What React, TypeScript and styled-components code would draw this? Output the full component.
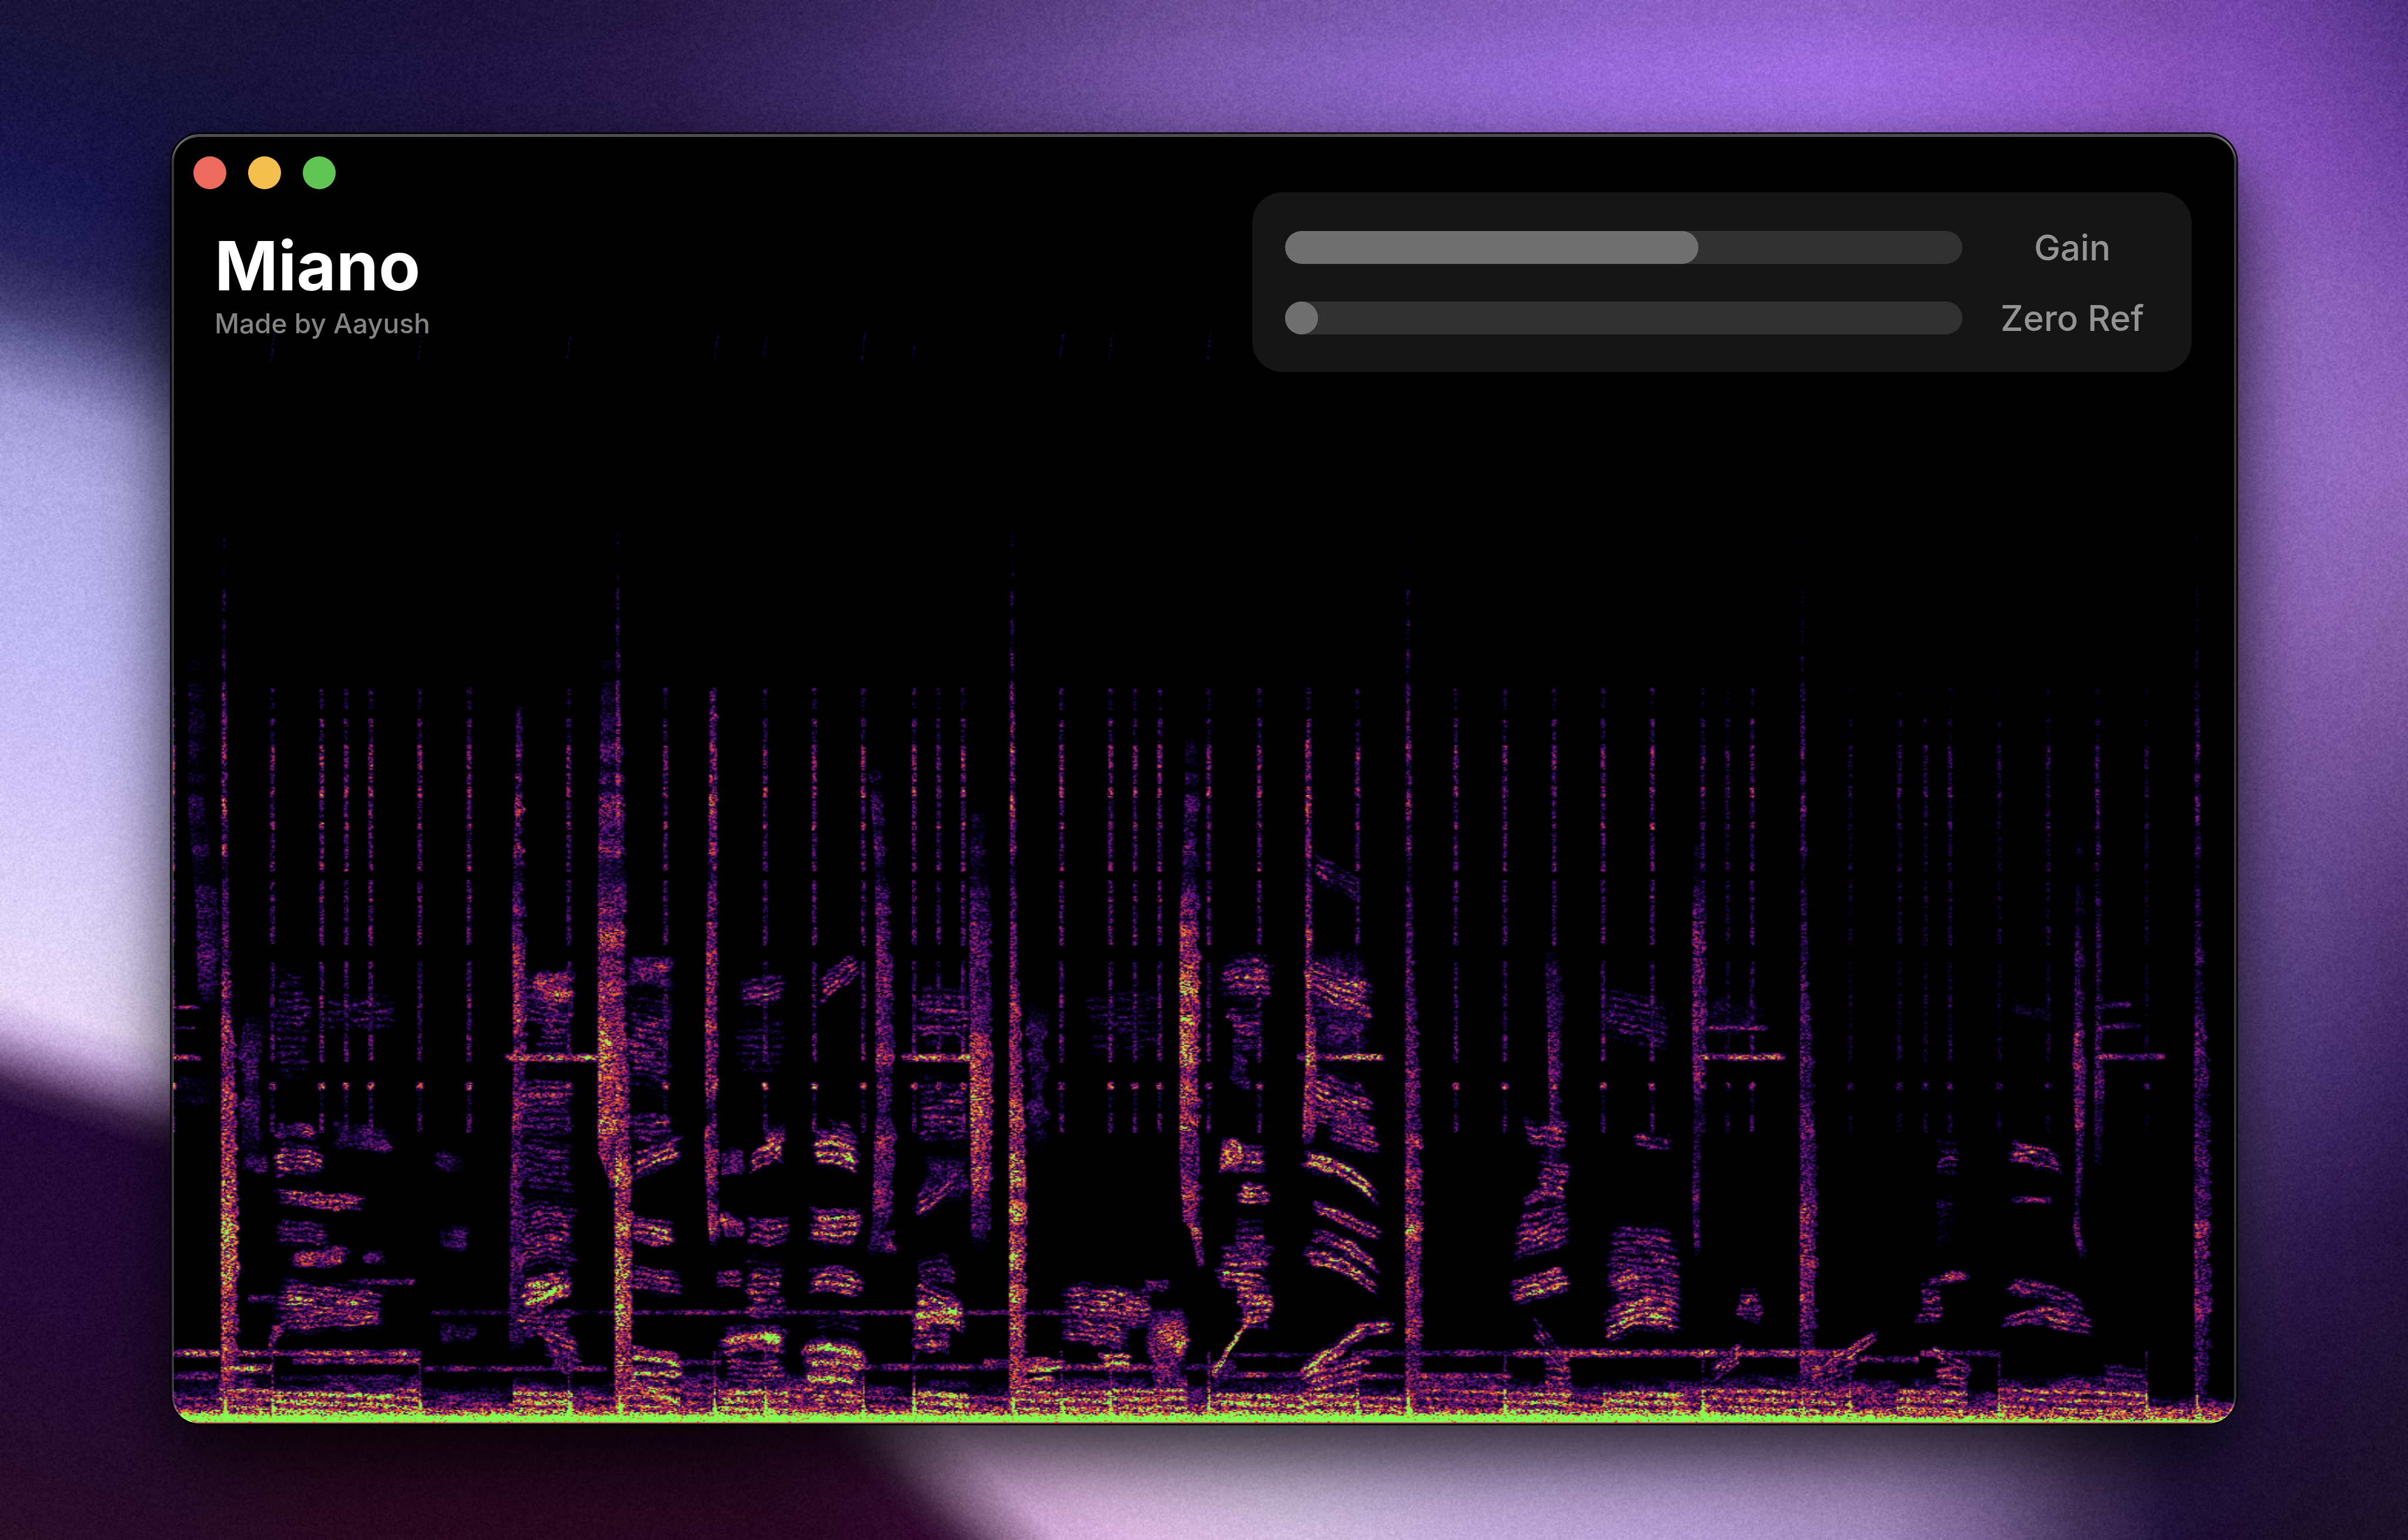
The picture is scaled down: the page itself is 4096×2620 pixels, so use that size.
import React, { useLayoutEffect, useRef, useState } from "react";
import styled, { createGlobalStyle } from "styled-components";

/* ---------- shared maths ---------- */

type RGB = [number, number, number];
type Stop = [number, RGB];

const clamp = (v: number, lo = 0, hi = 1) => (v < lo ? lo : v > hi ? hi : v);
const smooth = (a: number, b: number, v: number) => {
  const t = clamp((v - a) / (b - a));
  return t * t * (3 - 2 * t);
};
const mix = (a: RGB, b: RGB, t: number): RGB => [
  a[0] + (b[0] - a[0]) * t,
  a[1] + (b[1] - a[1]) * t,
  a[2] + (b[2] - a[2]) * t,
];
const hex = (n: number): RGB => [(n >> 16) & 255, (n >> 8) & 255, n & 255];
const ramp = (...pairs: number[]): Stop[] => {
  const out: Stop[] = [];
  for (let i = 0; i < pairs.length; i += 2) out.push([pairs[i], hex(pairs[i + 1])]);
  return out;
};
const sample = (stops: Stop[], v: number): RGB => {
  if (v <= stops[0][0]) return stops[0][1];
  for (let i = 1; i < stops.length; i++) {
    if (v <= stops[i][0]) {
      const t = (v - stops[i - 1][0]) / (stops[i][0] - stops[i - 1][0]);
      return mix(stops[i - 1][1], stops[i][1], t);
    }
  }
  return stops[stops.length - 1][1];
};
const makeRandom = (seed: number) => () => {
  seed = (seed + 0x6d2b79f5) | 0;
  let t = Math.imul(seed ^ (seed >>> 15), 1 | seed);
  t = (t + Math.imul(t ^ (t >>> 7), 61 | t)) ^ t;
  return ((t ^ (t >>> 14)) >>> 0) / 4294967296;
};
const lattice = (ix: number, iy: number) => {
  let h = Math.imul(ix, 374761393) + Math.imul(iy, 668265263);
  h = Math.imul(h ^ (h >>> 13), 1274126177);
  return ((h ^ (h >>> 16)) >>> 0) / 4294967296;
};
/* Smooth value noise in 0..1. */
const drift = (x: number, y: number) => {
  const ix = Math.floor(x);
  const iy = Math.floor(y);
  const u = smooth(0, 1, x - ix);
  const v = smooth(0, 1, y - iy);
  const a = lattice(ix, iy) * (1 - u) + lattice(ix + 1, iy) * u;
  const b = lattice(ix, iy + 1) * (1 - u) + lattice(ix + 1, iy + 1) * u;
  return a * (1 - v) + b * v;
};

/* ---------- wallpaper ---------- */

const TOP = ramp(
  0, 0x1a1438, 100, 0x17143f, 300, 0x1e1442, 430, 0x291a4c, 540, 0x3c2a66, 650, 0x5c4088,
  780, 0x7c5aae, 900, 0x8a64c6, 1050, 0x9a6cdc, 1200, 0xa06ee2, 1330, 0x945ed0, 1440, 0x8450b6,
  1500, 0x6c429c, 1568, 0x4e2f7c,
);
const LEFT = ramp(
  0, 0x1a1438, 50, 0x171442, 110, 0x1a1650, 160, 0x27235a, 195, 0x423e74, 222, 0x6a66a0,
  255, 0x9c97d2, 300, 0xb2ade6, 400, 0xbfb8f4, 500, 0xcfc4f8, 600, 0xe0d6fa, 648, 0xe8d8f8,
  668, 0xcab0e2, 686, 0x8a6a9c, 703, 0x40244e, 718, 0x240838, 850, 0x240a34, 950, 0x260c2a, 1003, 0x2a0e28,
);
const BOTTOM = ramp(
  0, 0x2a0e28, 300, 0x2a0820, 520, 0x280822, 605, 0x340a30, 625, 0x442244, 650, 0x846084,
  690, 0xd8aede, 740, 0xe2bce8, 850, 0xd6c2e4, 960, 0xc8b0e0, 1100, 0xbaa0d8, 1220, 0xa68cc0,
  1290, 0x7c6498, 1350, 0x48345e, 1410, 0x261644, 1568, 0x1c0f28,
);
const RIGHT: [number, Stop[]][] = [
  [1450, ramp(0, 0x7848b0, 100, 0x8e5cc8, 200, 0x9068c0, 300, 0x926cc2, 400, 0x8a66b4, 500, 0x7c5aa4, 600, 0x6c4e96, 700, 0x5a4284, 800, 0x402c62, 900, 0x281848, 1003, 0x1e0e32)],
  [1500, ramp(0, 0x6a3fa0, 100, 0x8450ba, 200, 0x9068c0, 300, 0x936cc4, 400, 0x8c64b6, 500, 0x76549e, 600, 0x60468a, 700, 0x4a3272, 800, 0x301a50, 900, 0x22103a, 1003, 0x1c1028)],
  [1568, ramp(0, 0x4e2f80, 100, 0x6a3fa0, 200, 0x8458b4, 300, 0x9068bc, 400, 0x8460a8, 500, 0x6c4c90, 600, 0x4f3270, 700, 0x36205a, 800, 0x24103c, 900, 0x1e1230, 1003, 0x1c1028)],
];

const rightColour = (x: number, y: number): RGB => {
  const a = sample(RIGHT[0][1], y);
  const b = sample(RIGHT[1][1], y);
  const c = sample(RIGHT[2][1], y);
  return x < 1500 ? mix(a, b, clamp((x - 1450) / 50)) : mix(b, c, clamp((x - 1500) / 68));
};

const wallpaperColour = (x: number, y: number): RGB => {
  const left = sample(LEFT, y - 0.3 * x);
  if (y < 200) {
    const top = mix([0, 0, 0], sample(TOP, x), 0.9 + 0.1 * smooth(0, 50, y));
    return mix(mix(left, top, smooth(60, 260, x)), rightColour(x, y), smooth(1380, 1470, x));
  }
  if (y > 840) {
    const lean = 1 - smooth(700, 1150, x);
    const bottom = sample(BOTTOM, x + (1003 - y) * (1.1 * lean - 0.1));
    return mix(mix(left, bottom, smooth(60, 220, x)), rightColour(x, y), smooth(1380, 1460, x));
  }
  return x < 784 ? left : rightColour(x, y);
};

const paintWallpaper = (canvas: HTMLCanvasElement) => {
  const W = 1568;
  const H = 1003;
  canvas.width = W;
  canvas.height = H;
  const ctx = canvas.getContext("2d")!;
  const img = ctx.createImageData(W, H);
  const random = makeRandom(7);
  for (let y = 0; y < H; y++) {
    for (let x = 0; x < W; x++) {
      const i = (y * W + x) * 4;
      img.data[i + 3] = 255;
      if (x > 130 && x < 1440 && y > 105 && y < 910) continue;
      const c = wallpaperColour(x, y);
      const grain = (random() + random() - 1) * (7 + Math.min(c[2], 160) * 0.06);
      img.data[i] = c[0] + grain;
      img.data[i + 1] = c[1] + grain;
      img.data[i + 2] = c[2] + grain;
    }
  }
  ctx.putImageData(img, 0, 0);
};

/* ---------- spectrogram ---------- */

const VIEW = { x: 111.8, y: 87.3, w: 1345.2, h: 839.9 };
const COLS = 1344;
const ROWS = 1120;

const HEAT: Stop[] = [
  [0, [0, 0, 0]],
  [0.1, [6, 2, 26]],
  [0.22, [38, 8, 84]],
  [0.36, [94, 20, 122]],
  [0.5, [158, 32, 104]],
  [0.62, [198, 48, 58]],
  [0.76, [226, 100, 44]],
  [0.88, [226, 184, 62]],
  [0.95, [190, 236, 70]],
  [1, [128, 255, 82]],
];

/* Strength of a hi-hat click down the frequency axis: y0, y1, level. */
const CLICK_BANDS = [
  [447, 453, 0.42], [453, 463, 0.3], [467, 474, 0.54], [474, 484, 0.36], [484, 502, 0.64], [502, 511, 0.56],
  [511, 520, 0.74], [520, 534, 0.48], [534, 541, 0.68], [541, 560, 0.48], [560, 568, 0.6],
  [572, 582, 0.48], [582, 588, 0.6], [588, 602, 0.46], [602, 616, 0.54], [625, 646, 0.44],
  [646, 657, 0.54], [657, 672, 0.42], [672, 692, 0.54], [704, 710, 0.84], [710, 724, 0.3], [724, 738, 0.5],
];
const CLICKS: [number, number][] = [
  [112, 1], [177, 0.85], [209, 1], [225, 0.9], [241, 1], [273, 0.9], [305, 1], [370, 0.85], [433, 0.9],
  [465, 1], [498, 0.85], [530, 0.95], [562, 0.9], [595, 0.95], [611, 0.8], [627, 0.95], [691, 0.95],
  [723, 0.95], [739, 0.9], [755, 0.95], [787, 0.85], [820, 0.9], [852, 0.95], [884, 0.85], [948, 0.85],
  [980, 0.85], [1012, 0.85], [1044, 0.85], [1076, 0.9], [1109, 0.7], [1125, 0.6], [1141, 0.8], [1205, 0.46],
  [1237, 0.55], [1254, 0.55], [1270, 0.58], [1302, 0.48], [1334, 0.54], [1366, 0.6], [1398, 0.48],
];

/* Drum strikes, each as keys of y, left, right, level. */
const kick = (x: number, g: number): number[][] => [
  [345, x - 1, x + 1, 0.2 * g], [380, x - 1, x + 1, 0.3 * g], [440, x - 1.5, x + 1.5, 0.36 * g],
  [490, x - 1.5, x + 2, 0.58 * g], [620, x - 1.5, x + 3.5, 0.58 * g], [690, x - 2, x + 7, 0.66 * g],
  [760, x - 2, x + 9, 0.8 * g], [800, x - 2, x + 9, 0.92 * g], [860, x - 2, x + 9, 0.82 * g],
  [890, x - 2, x + 9, 0.68 * g], [922, x - 2, x + 6, 0.74 * g],
];
const STRIKES: number[][][] = [
  kick(145.5, 1), kick(402, 1.05), kick(659, 1.02), kick(917, 0.84), kick(1174, 0.7), kick(1431, 0.66),
  [[430, 391, 404, 0.14], [500, 390, 406, 0.36], [570, 389, 407, 0.58], [610, 389, 407, 0.74], [690, 389, 407, 0.82], [750, 389, 407, 0.76], [768, 396, 407, 0.54], [790, 398, 405, 0.1]],
  [[460, 336, 340, 0.3], [520, 335, 340, 0.54], [600, 333, 342, 0.58], [690, 334, 342, 0.7], [770, 332, 340, 0.52], [870, 331, 342, 0.5], [885, 333, 342, 0]],
  [[450, 462, 466, 0.44], [560, 461, 467, 0.62], [640, 459, 467, 0.66], [710, 459, 467, 0.66], [728, 460, 465, 0.26], [740, 458, 468, 0.7], [780, 460, 468, 0.56], [800, 461, 469, 0.7], [812, 462, 468, 0.2]],
  [[500, 565, 574, 0.24], [550, 569, 576, 0.44], [600, 570, 580, 0.58], [690, 570, 582, 0.62], [724, 571, 581, 0.34], [740, 569, 583, 0.66], [790, 568, 580, 0.5], [812, 565, 572, 0.15]],
  [[530, 632, 642, 0.24], [600, 631, 645, 0.5], [690, 631, 646, 0.7], [760, 632, 646, 0.72], [800, 632, 645, 0.54], [822, 634, 642, 0]],
  [[480, 772, 780, 0.2], [560, 770, 780, 0.46], [600, 768, 781, 0.7], [625, 768, 781, 0.88], [690, 768, 781, 0.82], [750, 768, 781, 0.7], [795, 770, 782, 0.56], [800, 775, 782, 0.84], [820, 779, 784, 0.64], [828, 780, 784, 0]],
  [[480, 850, 854, 0.5], [640, 850, 855, 0.7], [688, 850, 858, 0.78], [740, 848, 856, 0.54], [750, 850, 854, 0]],
  [[540, 1104, 1108, 0.18], [600, 1102, 1111, 0.52], [690, 1102, 1111, 0.62], [720, 1103, 1109, 0.34], [780, 1102, 1107, 0.5], [812, 1103, 1108, 0.34], [825, 1104, 1108, 0]],
  [[540, 1352, 1356, 0.18], [655, 1351, 1357, 0.5], [690, 1350, 1359, 0.6], [760, 1352, 1357, 0.46], [785, 1351, 1355, 0.24], [800, 1350, 1355, 0.56], [815, 1353, 1359, 0.34], [824, 1356, 1360, 0]],
  [[490, 1365, 1368, 0.3], [640, 1365, 1369, 0.44], [700, 1364, 1371, 0.5], [770, 1364, 1369, 0.14]],
  [[430, 122, 132, 0.18], [530, 122, 134, 0.26], [590, 127, 142, 0.42], [640, 128, 142, 0.42], [655, 130, 140, 0.1]],
  [[620, 1006, 1014, 0.24], [650, 1007, 1018, 0.46], [730, 1009, 1016, 0.46], [790, 1008, 1014, 0.24]],
];

/* Voiced passages: x0, x1, y0, y1, level, slope, arch, stripe period (0 for plain noise). */
const VOICES: number[][] = [
  [108, 130, 653, 658, 0.6, 0, 0, 0], [108, 128, 667, 671, 0.5, 0, 0, 0], [108, 132, 685, 692, 0.8, 0, 0, 0],
  [112, 143, 695, 725, 0.26, 0, 0, 0], [155, 172, 640, 770, 0.36, 0, 0, 0], [156, 176, 748, 766, 0.38, 0, 0, 0],
  [176, 210, 728, 744, 0.56, 0, 0, 0], [212, 260, 726, 752, 0.46, 0.1, 0, 0], [176, 204, 610, 725, 0.36, 0, 0, 5],
  [204, 262, 642, 676, 0.36, 0, 0, 5], [176, 213, 741, 771, 0.92, 0.1, 3, 4], [174, 242, 770, 787, 0.74, 0.08, 0, 4],
  [177, 217, 789, 813, 0.6, 0.1, 0, 4], [186, 230, 812, 830, 0.6, -0.1, 0, 0], [236, 254, 811, 826, 0.5, 0, 0, 0],
  [174, 256, 827, 862, 0.78, 0.1, 1, 4], [174, 256, 850, 874, 0.74, -0.06, 2, 4], [158, 184, 841, 850, 0.5, 0, 0, 0],
  [225, 275, 831, 838, 0.5, 0, 0, 0], [175, 184, 860, 884, 0.6, -1, 0, 0], [282, 304, 746, 766, 0.34, 0, 0, 0],
  [284, 306, 792, 820, 0.34, 0, 0, 0], [284, 312, 858, 878, 0.3, 0, 0, 0],
  [332, 366, 622, 668, 0.6, 0.35, 0, 5], [344, 376, 626, 662, 0.68, 0, 0, 0], [348, 376, 644, 704, 0.52, 0, 0, 5],
  [326, 396, 684, 693, 0.96, 0, 0, 0], [332, 376, 692, 748, 0.52, 0, 0, 5], [332, 378, 730, 785, 0.46, 0.1, 0, 5],
  [332, 378, 775, 845, 0.5, -0.05, 5, 4], [336, 376, 828, 853, 0.9, -0.2, 0, 5], [340, 376, 842, 861, 1.15, -0.5, 0, 7],
  [332, 376, 848, 876, 0.62, 0, 0, 4], [350, 380, 852, 886, 0.6, 0.5, 0, 5], [356, 378, 868, 896, 0.52, 0.4, 0, 0],
  [406, 442, 618, 648, 0.6, 0, 0, 0], [406, 440, 632, 720, 0.5, 0.2, 0, 5], [408, 442, 720, 750, 0.56, 0, 0, 5],
  [408, 446, 748, 773, 0.8, -0.4, 0, 5], [406, 440, 784, 812, 0.86, 0.2, 0, 5], [407, 446, 819, 843, 0.72, 0.15, 0, 4],
  [405, 446, 875, 889, 1.3, 0.15, 2, 7], [407, 446, 887, 901, 1.1, 0, 0, 6], [408, 442, 894, 908, 0.8, 0, 0, 4],
  [414, 450, 892, 908, 1.15, 0.5, 0, 6],
  [480, 516, 634, 664, 0.5, -0.2, 0, 5], [478, 514, 650, 710, 0.3, 0, 0, 5], [532, 560, 632, 660, 0.6, -0.7, 0, 5],
  [470, 486, 744, 770, 0.54, 0, 0, 0], [486, 515, 747, 770, 0.76, -0.5, 0, 5], [498, 513, 726, 764, 0.6, 0, 0, 0],
  [483, 515, 785, 813, 0.74, 0, -3, 5], [469, 485, 785, 807, 0.7, 0.3, 0, 0], [466, 486, 824, 842, 0.6, 0, 0, 4],
  [484, 513, 810, 868, 0.58, 0, 0, 5], [465, 517, 865, 889, 1.15, 0, 6, 9], [469, 515, 878, 908, 0.64, 0, 0, 4],
  [466, 512, 900, 922, 1.05, -0.05, 0, 6], [526, 563, 732, 766, 1, 0.2, 4, 6], [538, 558, 722, 740, 0.6, 0.4, 0, 5],
  [524, 563, 779, 813, 0.84, 0, -3, 5], [523, 564, 822, 850, 0.78, 0.1, 5, 5], [528, 562, 852, 874, 0.34, 0, 3, 4],
  [520, 566, 869, 895, 1.18, 0.1, 4, 9], [521, 563, 887, 907, 1.2, 0.05, 0, 8], [524, 565, 901, 923, 0.8, 0, 2, 4],
  [564, 586, 796, 820, 0.5, 0, 0, 0],
  [593, 636, 632, 688, 0.54, 0, 0, 5], [586, 640, 684, 693, 0.96, 0, 0, 0], [594, 634, 690, 755, 0.5, 0, 0, 5],
  [594, 624, 776, 800, 0.66, -0.7, 0, 5], [598, 634, 745, 790, 0.38, 0, 0, 0], [598, 622, 816, 844, 0.56, 0, 4, 4],
  [594, 629, 826, 860, 0.76, 0.5, 3, 5], [592, 629, 849, 871, 1.15, -0.15, 2, 8], [593, 624, 862, 888, 0.68, 0, 4, 5],
  [590, 633, 901, 922, 1.1, 0.1, 3, 6], [700, 764, 630, 700, 0.28, 0, 0, 5], [668, 684, 630, 770, 0.36, 0, 0, 0],
  [688, 755, 830, 862, 0.74, 0.12, 2, 4], [688, 740, 850, 878, 0.7, 0.2, 2, 4], [716, 754, 834, 874, 0.66, -0.1, 0, 4],
  [742, 766, 831, 843, 0.52, 0, 0, 0], [745, 776, 846, 896, 0.66, 0, 0, 0], [747, 773, 856, 886, 0.84, 0, 0, 0],
  [748, 774, 880, 912, 0.56, 0, 0, 0], [715, 740, 877, 897, 0.84, 0, 0, 5], [658, 698, 883, 896, 1, 0, 0, 7],
  [660, 692, 892, 912, 0.7, 0, 0, 5],
  [791, 831, 618, 660, 0.6, 0, 3, 5], [798, 826, 646, 694, 0.5, 0, 0, 5], [800, 816, 676, 712, 0.4, 0.4, 0, 0],
  [792, 809, 738, 767, 1.05, 0, 0, 0], [806, 826, 740, 768, 0.74, 0, 0, 5], [805, 828, 766, 788, 0.9, 0, 0, 5],
  [804, 824, 784, 838, 0.5, 0, 0, 5], [792, 832, 806, 832, 0.58, 0, 0, 5], [791, 826, 820, 840, 0.84, 0.2, 0, 5],
  [805, 829, 828, 872, 0.98, 0, 0, 5], [789, 818, 890, 900, 1.1, -1.5, 0, 0], [790, 806, 880, 906, 0.5, 0, 0, 0],
  [850, 896, 600, 710, 0.38, 0, 0, 0], [848, 898, 612, 656, 0.76, 0.4, 0, 5], [842, 906, 684, 692, 0.9, 0, 0, 0],
  [850, 898, 684, 738, 0.66, 0.4, 0, 5], [845, 899, 744, 765, 1.02, 0.5, 7, 6], [864, 900, 714, 750, 0.64, 0.3, 0, 5],
  [854, 905, 776, 793, 0.78, 0.45, 0, 5], [845, 905, 810, 828, 0.84, 0.5, 10, 6], [850, 902, 795, 813, 0.7, 0.5, 6, 5],
  [844, 900, 888, 905, 1.08, -0.7, 0, 6], [848, 894, 884, 916, 0.7, -0.2, 0, 5], [878, 908, 858, 875, 0.76, -0.1, 0, 5],
  [854, 888, 550, 576, 0.44, 0.5, 0, 5],
  [990, 1025, 722, 752, 0.66, 0.1, 0, 5], [1000, 1023, 744, 788, 0.64, 0.2, 0, 5], [992, 1012, 778, 789, 0.46, -0.6, 0, 0],
  [984, 1025, 784, 830, 0.62, -0.3, 0, 5], [980, 1026, 831, 856, 0.78, -0.3, 0, 5], [996, 1021, 849, 873, 0.6, 1.2, 0, 5],
  [1004, 1026, 870, 916, 0.7, 0, 0, 5], [1042, 1098, 788, 838, 0.54, 0.1, 2, 5], [1042, 1100, 827, 855, 0.7, 0, 7, 5],
  [1042, 1098, 846, 882, 0.9, -0.1, 8, 5], [1038, 1094, 630, 684, 0.38, 0.25, 0, 5], [1062, 1094, 734, 750, 0.5, 0.1, 0, 5],
  [1104, 1156, 666, 672, 0.54, 0, 0, 0], [1100, 1166, 684, 692, 0.8, 0, 0, 0], [1108, 1152, 644, 680, 0.28, 0, 0, 0],
  [1131, 1148, 834, 866, 0.6, 0, 0, 4], [1114, 1136, 884, 908, 0.6, -0.8, 0, 4], [1172, 1226, 892, 908, 0.68, -0.6, 0, 5],
  [1174, 1214, 882, 910, 0.64, -0.3, 0, 5], [1247, 1268, 830, 868, 0.58, 0, 0, 5], [1254, 1286, 829, 841, 0.6, -0.2, 0, 0],
  [1258, 1282, 871, 888, 0.72, 0.5, 0, 5], [1260, 1284, 880, 910, 0.6, 0, 0, 5], [1262, 1278, 738, 770, 0.46, 0, 0, 5],
  [1262, 1274, 770, 820, 0.28, 0, 0, 0], [1305, 1344, 740, 764, 0.64, 0.2, 4, 5], [1310, 1340, 777, 785, 0.5, 0, 0, 0],
  [1302, 1364, 827, 847, 0.6, 0.3, 5, 5], [1298, 1366, 855, 873, 0.7, 0, 8, 5], [1320, 1366, 844, 866, 0.6, 0.2, 0, 5],
  [1364, 1402, 882, 912, 0.56, 0.1, 0, 5], [1340, 1362, 860, 868, 0.3, 0, 0, 0], [1360, 1410, 684, 692, 0.66, 0, 0, 0],
  [1366, 1392, 650, 658, 0.42, 0, 0, 0], [1366, 1394, 664, 672, 0.42, 0, 0, 0], [1308, 1340, 644, 662, 0.24, 0.4, 0, 0],
];

/* Held tones: x0, x1, y, thickness, level. */
const TONES: number[][] = [
  [112, 143, 881, 4, 0.86], [143, 177, 891, 5, 1.05], [150, 273, 881, 4, 0.74], [190, 273, 886, 4, 0.7],
  [275, 395, 891, 3.5, 0.56], [280, 400, 854.5, 3, 0.36], [400, 700, 854.5, 3, 0.54], [440, 470, 887, 4, 0.5],
  [540, 660, 890, 4, 0.54], [690, 790, 890, 4, 0.62], [640, 690, 887, 4, 0.6], [800, 870, 882, 3, 0.42],
  [880, 985, 881, 4, 0.56], [885, 985, 896, 4, 0.62], [985, 1110, 881, 4.5, 0.74], [1110, 1210, 881, 4.5, 0.76],
  [1210, 1250, 885, 4, 0.5], [1250, 1302, 881, 4, 0.54], [790, 850, 895, 4, 0.62],
  [112, 150, 896, 6, 0.5], [177, 273, 897, 4, 0.36],
];

/* Bass floor: x0, x1, top of the bright band, level. */
const FLOOR: number[][] = [
  [112, 143, 908, 0.62], [143, 177, 903, 0.98], [177, 256, 905, 1.18], [256, 273, 903, 0.88], [273, 334, 911, 0.6],
  [334, 372, 905, 1.1], [372, 402, 908, 0.66], [402, 442, 902, 0.9], [442, 468, 900, 0.64], [468, 512, 904, 1],
  [512, 530, 902, 0.7], [530, 562, 904, 0.76], [562, 594, 908, 0.64], [594, 630, 906, 1.06], [630, 659, 908, 0.7],
  [659, 690, 904, 1.04], [690, 723, 904, 1.04], [723, 750, 903, 1.04], [750, 772, 903, 1.08], [772, 787, 908, 0.7],
  [787, 848, 906, 1.16], [848, 884, 906, 1.06], [884, 917, 908, 0.84], [917, 980, 903, 0.72], [980, 1025, 905, 1.04],
  [1025, 1045, 908, 0.7], [1045, 1096, 905, 1.14], [1096, 1110, 907, 0.74], [1110, 1205, 903, 0.9],
  [1205, 1236, 905, 0.64], [1236, 1281, 904, 0.92], [1281, 1302, 912, 0.5], [1302, 1398, 903, 0.8], [1398, 1457, 917, 0.54],
];
const THUMPS = [146, 177, 273, 370, 403, 465, 498, 562, 595, 660, 691, 723, 787, 884, 917, 980, 1109, 1174, 1205, 1302, 1398, 1431];
const SPARKS = [177, 273, 370, 466, 498, 562, 595, 691, 723, 787];

const buildField = () => {
  const field = new Float32Array(COLS * ROWS);
  const sx = COLS / VIEW.w;
  const sy = ROWS / VIEW.h;
  const toCol = (x: number) => clamp(Math.round((x - VIEW.x) * sx), 0, COLS - 1);
  const toRow = (y: number) => clamp(Math.round((y - VIEW.y) * sy), 0, ROWS - 1);

  const cover = (
    x0: number, x1: number, y0: number, y1: number,
    level: (x: number, y: number) => number,
  ) => {
    const c1 = toCol(x1);
    const r1 = toRow(y1);
    for (let r = toRow(y0); r <= r1; r++) {
      const y = VIEW.y + r / sy;
      for (let c = toCol(x0); c <= c1; c++) {
        const v = level(VIEW.x + c / sx, y);
        const i = r * COLS + c;
        if (v > field[i]) field[i] = v;
      }
    }
  };
  const fade = (v: number, a: number, b: number, soft: number) =>
    clamp((v - a) / soft + 0.3) * clamp((b - v) / soft + 0.3);

  for (const [x, gain] of CLICKS) {
    for (const [y0, y1, level] of CLICK_BANDS) {
      const half = level > 0.8 ? 2.6 : 1.9;
      cover(x - half, x + half, y0, y1, (px, py) =>
        level * gain * clamp(1.4 - Math.abs(px - x) / half) * fade(py, y0, y1, 2));
    }
  }

  for (const keys of STRIKES) {
    for (let k = 1; k < keys.length; k++) {
      const [ya, la, ra, va] = keys[k - 1];
      const [yb, lb, rb, vb] = keys[k];
      cover(Math.min(la, lb) - 2, Math.max(ra, rb) + 3, ya, yb, (px, py) => {
        const t = (py - ya) / (yb - ya);
        const l = la + (lb - la) * t;
        const r = ra + (rb - ra) * t + (drift(px * 0.05, py * 0.3) - 0.5) * (rb - lb > 5 ? 4 : 1);
        const beat = py < 600 ? 0.5 + 0.9 * drift(3, py * 0.15) : 0.74 + 0.5 * drift(la, py * 0.09);
        const lean = 1.08 - 0.34 * clamp((px - l) / Math.max(4, r - l));
        return (va + (vb - va) * t) * beat * lean * fade(px, l - 0.5, r + 0.5, 2);
      });
    }
  }

  for (const [x0, x1, y0, y1, level, slope, arch, period] of VOICES) {
    const thin = y1 - y0 < 10 && period === 0;
    const bend = (px: number) => {
      const u = (px - x0) / (x1 - x0);
      return slope * (px - x0) - arch * 4 * u * (1 - u);
    };
    const reach = Math.abs(slope) * (x1 - x0) + Math.abs(arch) + 3;
    const softY = (y1 - y0) * (thin ? 0.45 : 0.36);
    const softX = (x1 - x0) * (thin ? 0.12 : 0.22);
    cover(x0, x1, y0 - reach, y1 + reach, (px, py) => {
      const blot = drift(px * 0.16, py * 0.26);
      const q = py - bend(px) + (thin ? 0 : (blot - 0.5) * 3);
      const p = px + (drift(px * 0.1 + 9, py * 0.15) - 0.5) * 7;
      const stripe = period ? 0.78 + 0.32 * Math.sin(((q - y0) / period) * Math.PI * 2) : 0.95;
      const body = 0.6 + 0.76 * drift(px * 0.1 + 40, py * 0.17);
      return level * stripe * body * smooth(0, softX, p - x0 + 1) * smooth(0, softX, x1 - p) *
        smooth(0, softY, q - y0) * smooth(0, softY, y1 - q);
    });
  }

  for (const [x0, x1, y, thick, level] of TONES) {
    cover(x0, x1, y - thick, y + thick, (px, py) => {
      const wobble = 0.6 + 0.66 * drift(px * 0.14, y);
      return level * wobble * clamp(1.25 - Math.abs(py - y) / (thick * 0.75)) * fade(px, x0, x1, 1);
    });
  }

  for (const [x0, x1, top, level] of FLOOR) {
    cover(x0, x1, top - 14, 928, (px, py) => {
      const body = level * (0.8 + 0.26 * Math.sin((py - top - (px - x0) * 0.04) * 1.1)) * (0.8 + 0.36 * drift(px * 0.12, py * 0.4));
      const haze = 0.46 * smooth(top - 14, top, py) * (0.4 + drift(px * 0.1, py * 0.2));
      return Math.max(body * smooth(top - 3, top + 3, py), haze);
    });
  }
  cover(112, 1457, 912, 928, (px, py) => {
    const edge = 919.5 + smooth(1080, 1400, px) * 3.5;
    return 0.8 * smooth(912, 919, py) + 0.7 * smooth(edge - 1, edge + 3, py);
  });

  for (const x of THUMPS) {
    cover(x - 4, x + 8, 880, 928, (px, py) => {
      const spread = 1.2 + smooth(912, 926, py) * (px > x ? 7 : 2.5);
      const glow = 0.45 + 0.85 * smooth(896, 916, py);
      return (x > 1150 ? 0.95 : 1.1) * glow * clamp(1.3 - Math.abs(px - x) / spread);
    });
  }
  for (const x of SPARKS) {
    cover(x - 2, x + 2, 213, 238, (px, py) => 0.27 * clamp(1.2 - Math.abs(px - x - (226 - py) * 0.12) / 1.4) * fade(py, 213, 238, 8));
  }
  return field;
};

/* Magnitude of a smoothed complex Gaussian, which is how noise looks in a short-time transform. */
const buildSpeckle = () => {
  const n = COLS * ROWS;
  const random = makeRandom(41);
  const out = new Float32Array(n);
  for (let pass = 0; pass < 2; pass++) {
    const g = new Float32Array(n);
    for (let i = 0; i < n; i++) g[i] = (random() + random() + random() + random() - 2) * 1.73;
    for (let r = 1; r < ROWS - 1; r++) {
      for (let c = 1; c < COLS - 1; c++) {
        const i = r * COLS + c;
        const v = (g[i] + 0.7 * (g[i - 1] + g[i + 1]) + 0.5 * (g[i - COLS] + g[i + COLS])) / 1.57;
        out[i] += v * v * 0.5;
      }
    }
  }
  for (let i = 0; i < n; i++) out[i] = Math.sqrt(out[i]);
  return out;
};

const paintSpectrogram = (canvas: HTMLCanvasElement) => {
  canvas.width = COLS;
  canvas.height = ROWS;
  const ctx = canvas.getContext("2d")!;
  const img = ctx.createImageData(COLS, ROWS);
  const field = buildField();
  const speckle = buildSpeckle();
  const palette = Array.from({ length: 256 }, (_, i) => sample(HEAT, i / 255));
  for (let i = 0; i < field.length; i++) {
    const a = field[i];
    const s = speckle[i];
    const noise = s < 1.1 ? s : 1.1 + (s - 1.1) * 0.4;
    const v = a > 0.02 ? a * (0.1 + 0.86 * noise) - 0.11 + (a > 1.25 ? (a - 1.25) * 2 : 0) : 0;
    const [red, green, blue] = palette[Math.round(clamp(v) * 255)];
    img.data[i * 4] = red;
    img.data[i * 4 + 1] = green;
    img.data[i * 4 + 2] = blue;
    img.data[i * 4 + 3] = 255;
  }
  ctx.putImageData(img, 0, 0);
};

/* ---------- layout ---------- */

const GlobalStyle = createGlobalStyle`
  *, *::before, *::after { box-sizing: border-box; }
  body { margin: 0; background: #1a1438; }
`;

const Desktop = styled.main`
  position: relative;
  display: flex;
  min-height: 100vh;
  padding: 228px 292px 198px;
  font-family: Inter, "Liberation Sans", sans-serif;
`;

const Backdrop = styled.canvas`
  position: absolute;
  inset: 0;
  width: 100%;
  height: 100%;
`;

const AppWindow = styled.section`
  position: relative;
  display: flex;
  flex: 1;
  border-radius: 48px;
  box-shadow:
    0 0 0 3px rgba(0, 0, 0, 0.85),
    0 40px 90px rgba(0, 0, 0, 0.35),
    0 70px 150px rgba(0, 0, 0, 0.65);
`;

const Screen = styled.div`
  position: relative;
  flex: 1;
  overflow: hidden;
  border-radius: 48px;
  background: #000;

  &::after {
    content: "";
    position: absolute;
    inset: 0;
    border-radius: inherit;
    pointer-events: none;
    box-shadow:
      inset 4px 0 0 rgba(255, 255, 255, 0.22),
      inset -4px 0 0 rgba(255, 255, 255, 0.22),
      inset 0 5px 0 rgba(255, 255, 255, 0.3);
  }
`;

const Overlay = styled.div`
  position: relative;
  display: flex;
  justify-content: space-between;
  align-items: flex-start;
  padding-right: 76px;
`;

const Corner = styled.div`
  display: flex;
  flex-direction: column;
  gap: 64px;
  padding: 38px 0 0 37px;
`;

const Lights = styled.div`
  display: flex;
  gap: 37px;
`;

const Light = styled.button<{ $colour: string }>`
  width: 56px;
  height: 56px;
  padding: 0;
  border: 0;
  border-radius: 50%;
  background: ${(p) => p.$colour};
`;

const Heading = styled.header`
  display: flex;
  flex-direction: column;
  padding-left: 36px;
`;

const Title = styled.h1`
  margin: 0;
  color: #fff;
  font-size: 116px;
  font-weight: 700;
  line-height: 132px;
`;

const Byline = styled.p`
  margin: 0;
  color: #848484;
  font-size: 46px;
  font-weight: 500;
  line-height: 64px;
`;

const Panel = styled.form`
  display: grid;
  gap: 64px;
  margin-top: 99px;
  padding: 64px 56px 66px;
  width: 46.5%;
  border-radius: 52px;
  background: #151515;
`;

const Control = styled.div`
  display: grid;
  grid-template-columns: 1fr 294px;
  align-items: center;
  gap: 40px;
  height: 56px;
`;

const Slider = styled.input<{ $ratio: number }>`
  appearance: none;
  width: 100%;
  height: 56px;
  margin: 0;
  border-radius: 28px;
  background: linear-gradient(
    to right,
    #707070 calc(28px + ${(p) => p.$ratio} * (100% - 56px)),
    #313131 0
  );

  &::-webkit-slider-thumb {
    appearance: none;
    width: 56px;
    height: 56px;
    border-radius: 50%;
    background: #707070;
  }
`;

const Label = styled.label`
  color: #949494;
  font-size: 60px;
  font-weight: 500;
  line-height: 60px;
  text-align: center;
  white-space: nowrap;
`;

const LIGHTS = [
  { name: "Close", colour: "#ec6a5e" },
  { name: "Minimise", colour: "#f5bf4f" },
  { name: "Zoom", colour: "#61c554" },
];

const usePainted = (paint: (canvas: HTMLCanvasElement) => void) => {
  const ref = useRef<HTMLCanvasElement>(null);
  useLayoutEffect(() => {
    if (ref.current) paint(ref.current);
  }, [paint]);
  return ref;
};

const SliderRow = ({ id, label, initial }: { id: string; label: string; initial: number }) => {
  const [value, setValue] = useState(initial);
  return (
    <Control>
      <Slider
        id={id}
        type="range"
        min={0}
        max={100}
        value={value}
        $ratio={value / 100}
        onChange={(e) => setValue(Number(e.target.value))}
      />
      <Label htmlFor={id}>{label}</Label>
    </Control>
  );
};

export default function App() {
  const wallpaper = usePainted(paintWallpaper);
  const spectrogram = usePainted(paintSpectrogram);
  return (
    <Desktop>
      <GlobalStyle />
      <Backdrop ref={wallpaper} aria-hidden="true" />
      <AppWindow>
        <Screen>
          <Backdrop ref={spectrogram} role="img" aria-label="Live spectrogram" />
          <Overlay>
            <Corner>
              <Lights>
                {LIGHTS.map((l) => (
                  <Light key={l.name} type="button" aria-label={l.name} $colour={l.colour} />
                ))}
              </Lights>
              <Heading>
                <Title>Miano</Title>
                <Byline>Made by Aayush</Byline>
              </Heading>
            </Corner>
            <Panel>
              <SliderRow id="gain" label="Gain" initial={59} />
              <SliderRow id="zero-ref" label="Zero Ref" initial={0} />
            </Panel>
          </Overlay>
        </Screen>
      </AppWindow>
    </Desktop>
  );
}
